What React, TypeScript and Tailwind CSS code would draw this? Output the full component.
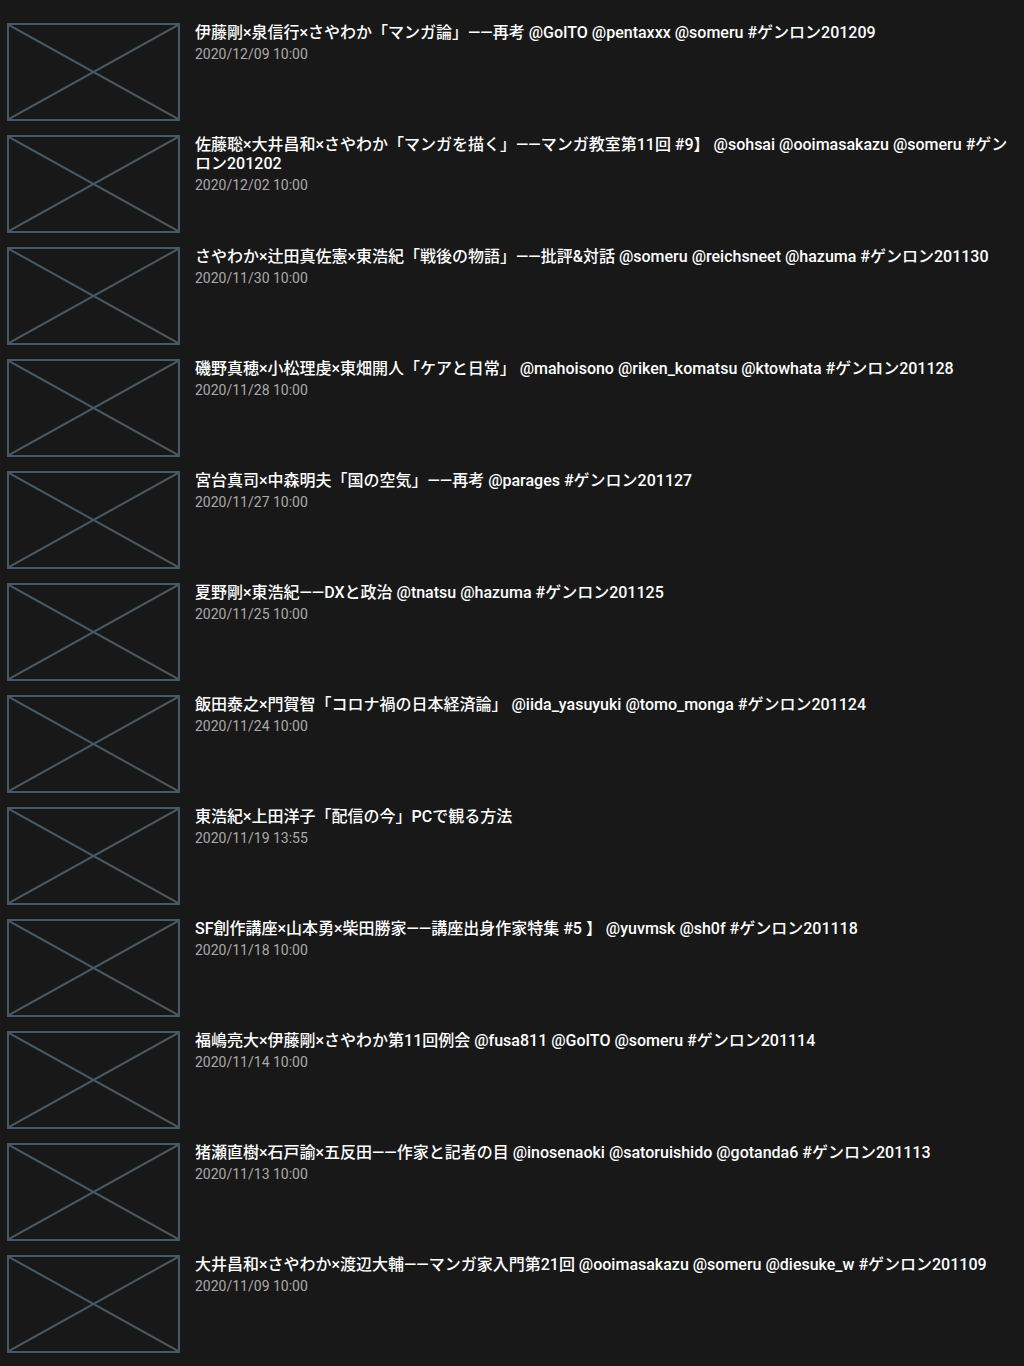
import { JSX } from "react";

type Video = {
  title: string;
  date: string;
};

const VIDEOS: Video[] = [
  {
    title:
      "伊藤剛×泉信行×さやわか「マンガ論」——再考 @GoITO @pentaxxx @someru #ゲンロン201209",
    date: "2020/12/09 10:00",
  },
  {
    title:
      "佐藤聡×大井昌和×さやわか「マンガを描く」——マンガ教室第11回 #9】 @sohsai @ooimasakazu @someru #ゲンロン201202",
    date: "2020/12/02 10:00",
  },
  {
    title:
      "さやわか×辻田真佐憲×東浩紀「戦後の物語」——批評&対話 @someru @reichsneet @hazuma #ゲンロン201130",
    date: "2020/11/30 10:00",
  },
  {
    title:
      "磯野真穂×小松理虔×東畑開人「ケアと日常」 @mahoisono @riken_komatsu @ktowhata #ゲンロン201128",
    date: "2020/11/28 10:00",
  },
  {
    title: "宮台真司×中森明夫「国の空気」——再考 @parages #ゲンロン201127",
    date: "2020/11/27 10:00",
  },
  {
    title: "夏野剛×東浩紀——DXと政治 @tnatsu @hazuma #ゲンロン201125",
    date: "2020/11/25 10:00",
  },
  {
    title:
      "飯田泰之×門賀智「コロナ禍の日本経済論」 @iida_yasuyuki @tomo_monga #ゲンロン201124",
    date: "2020/11/24 10:00",
  },
  {
    title: "東浩紀×上田洋子「配信の今」PCで観る方法",
    date: "2020/11/19 13:55",
  },
  {
    title:
      "SF創作講座×山本勇×柴田勝家——講座出身作家特集 #5 】 @yuvmsk @sh0f #ゲンロン201118",
    date: "2020/11/18 10:00",
  },
  {
    title:
      "福嶋亮大×伊藤剛×さやわか第11回例会 @fusa811 @GoITO @someru #ゲンロン201114",
    date: "2020/11/14 10:00",
  },
  {
    title:
      "猪瀬直樹×石戸諭×五反田——作家と記者の目 @inosenaoki @satoruishido @gotanda6 #ゲンロン201113",
    date: "2020/11/13 10:00",
  },
  {
    title:
      "大井昌和×さやわか×渡辺大輔——マンガ家入門第21回 @ooimasakazu @someru @diesuke_w #ゲンロン201109",
    date: "2020/11/09 10:00",
  },
];

const Thumbnail = (): JSX.Element => (
  <div className="w-[173px] h-[98px] shrink-0 border-2 border-[#455a64]">
    <svg
      className="block w-full h-full"
      viewBox="0 0 100 100"
      preserveAspectRatio="none"
    >
      <line
        x1="0"
        y1="0"
        x2="100"
        y2="100"
        stroke="#455a64"
        strokeWidth="2"
        vectorEffect="non-scaling-stroke"
      />
      <line
        x1="100"
        y1="0"
        x2="0"
        y2="100"
        stroke="#455a64"
        strokeWidth="2"
        vectorEffect="non-scaling-stroke"
      />
    </svg>
  </div>
);

export default function App(): JSX.Element {
  return (
    <div className="min-h-screen bg-[#181818] font-['Roboto','Noto_Sans_CJK_JP',sans-serif]">
      <ul className="flex flex-col gap-[14px] pt-[23px] pb-[13px] pl-[7px] pr-[7px]">
        {VIDEOS.map((video) => (
          <li key={video.date} className="flex items-start gap-[15px]">
            <Thumbnail />
            <div className="min-w-0 flex-1">
              <p className="text-[16px] leading-[19px] font-medium text-white break-words">
                {video.title}
              </p>
              <p className="mt-[3px] text-[14px] leading-[18px] text-[#aaaaaa]">
                {video.date}
              </p>
            </div>
          </li>
        ))}
      </ul>
    </div>
  );
}
